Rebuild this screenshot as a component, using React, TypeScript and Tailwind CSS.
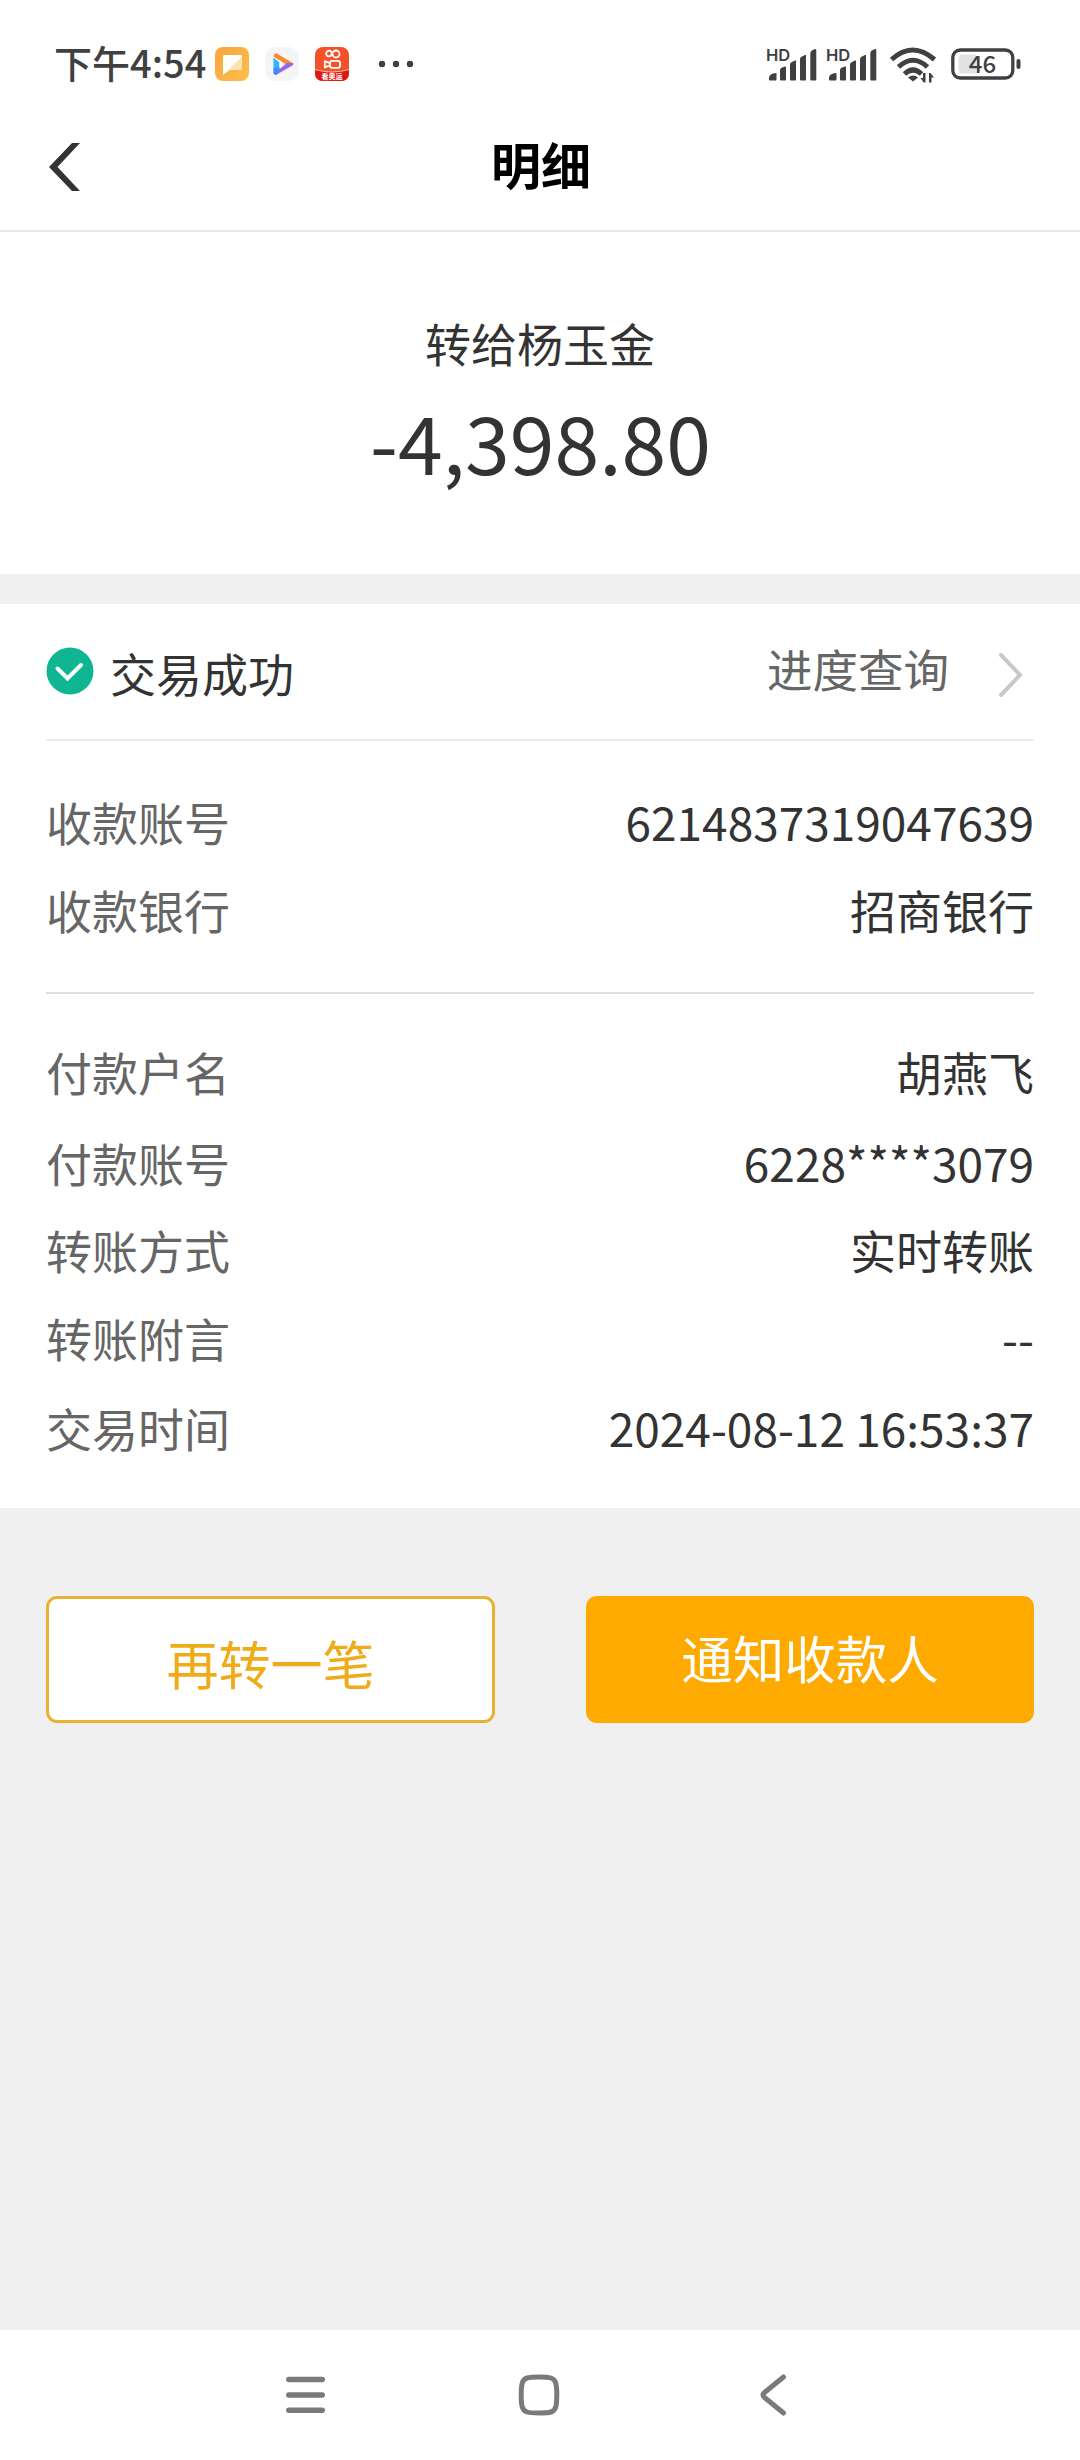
import React from 'react';

type Row = { label: string; value: string; height: string };

const payeeRows: Row[] = [
  { label: '收款账号', value: '6214837319047639', height: 'h-[88px]' },
  { label: '收款银行', value: '招商银行', height: 'h-[88px]' },
];

const payerRows: Row[] = [
  { label: '付款户名', value: '胡燕飞', height: 'h-[92px]' },
  { label: '付款账号', value: '6228****3079', height: 'h-[90px]' },
  { label: '转账方式', value: '实时转账', height: 'h-[84px]' },
  { label: '转账附言', value: '--', height: 'h-[92px]' },
  { label: '交易时间', value: '2024-08-12 16:53:37', height: 'h-[88px]' },
];

const Signal: React.FC = () => (
  <svg width="52" height="36" viewBox="0 0 52 36" className="shrink-0 overflow-visible" fill="#404040">
    <text x="-1" y="14.500" fontSize="16.500" fontWeight="600" fontFamily="Inter, sans-serif">HD</text>
    <path d="M2 33.500V31q1-3 4-3.500l3.500-.5v6.500q0 1-1 1H3q-1 0-1-1z" />
    <path d="M13 33.500V24q0-1.500 1.500-2.200L18 20.500h1v13q0 1-1 1h-4q-1 0-1-1z" />
    <path d="M23 33.500V18.500q0-1.500 1.500-2.200L28 14.500h1v19q0 1-1 1h-4q-1 0-1-1z" />
    <path d="M33 33.500V13q0-1.500 1.500-2.200L38 9h1v24.500q0 1-1 1h-4q-1 0-1-1z" />
    <path d="M43.300 33.500V7q0-1.500 1.500-2.500l2.500-1.300q2-.5 2 1v29.300q0 1-1 1h-4q-1 0-1-1z" />
  </svg>
);

const StatusBar: React.FC = () => (
  <div className="flex h-[128px] items-center pl-[54px]">
    <span className="mb-[4px] w-[161px] shrink-0 text-[38px] font-medium leading-none text-[#404040]">下午4:54</span>

    <svg width="34" height="34" viewBox="0 0 34 34" className="shrink-0">
      <defs>
        <linearGradient id="note" x1="0" y1="0" x2="1" y2="1">
          <stop offset="0" stopColor="#f9a43f" />
          <stop offset="1" stopColor="#fbc04a" />
        </linearGradient>
      </defs>
      <rect width="34" height="34" rx="8" fill="url(#note)" />
      <path d="M8 9.500Q8 8 9.500 8h16Q27 8 27 9.500v12q0 1.500-1.500 1.500H15.500L8 28z" fill="#fde3b4" />
      <path d="M8 9.500Q8 8 9.500 8h16Q27 8 27 9.500L8 28z" fill="#ffffff" />
    </svg>

    <svg width="34" height="34" viewBox="0 0 34 34" className="ml-4 shrink-0">
      <rect width="34" height="34" rx="11" fill="#f5f5f8" />
      <path d="M8.500 10.500l6 5v6l-3 6-3-1z" fill="#35b5f5" />
      <path d="M11 6l17.500 10.500-4.500 3-15.500-10q.5-3 2.500-3.500z" fill="#f58b2e" />
      <path d="M28.500 16.500q0 1.500-2 2.500L11 28q-1.500 0-2-1.500l13-10.500z" fill="#9a63f0" />
      <path d="M8.500 21l6-1v4.500L11 28q-2 0-2.500-2z" fill="#3f8cf8" />
      <path d="M14.500 13.500l5.500 3.500-5.500 4z" fill="#ffffff" />
    </svg>

    <svg width="34" height="34" viewBox="0 0 34 34" className="ml-4 shrink-0">
      <rect width="34" height="34" rx="8" fill="#f4502a" />
      <path d="M0 22q17 5.500 34 0v4q0 8-8 8H8q-8 0-8-8z" fill="#dc1a14" />
      <path d="M0 22.500q17 5 34 0" fill="none" stroke="#ffc49a" strokeWidth="1" />
      <g fill="none" stroke="#ffffff" strokeWidth="1.800">
        <circle cx="14" cy="6.500" r="2.800" />
        <circle cx="21" cy="7" r="3.500" />
        <rect x="15" y="13.800" width="10" height="7" rx="2" />
        <path d="M15 16.200l-5.200-2v6.200l5.200-2" strokeLinejoin="round" />
      </g>
      <text x="17" y="32" fontSize="7" fontWeight="700" fill="#ffffff" textAnchor="middle">看奥运</text>
    </svg>

    <svg width="36" height="8" viewBox="0 0 36 8" className="ml-[29px] shrink-0" fill="#404040">
      <circle cx="4" cy="4" r="3.200" />
      <circle cx="18" cy="4" r="3.200" />
      <circle cx="32" cy="4" r="3.200" />
    </svg>

    <div className="ml-[353px] flex items-center">
      <Signal />
      <div className="w-2" />
      <Signal />

      <svg width="48" height="36" viewBox="0 0 48 36" className="ml-[10px] mt-px shrink-0">
        <g fill="none" stroke="#404040" strokeWidth="5">
          <path d="M2.500 12.500q21-19 43 0" />
          <path d="M9.500 20q14.500-13.500 29 0" />
          <path d="M15.500 27q8.500-8 17 0" />
        </g>
        <path d="M24 34.500l-5-4q5-4 10 0z" fill="#404040" />
        <path d="M36.500 26v9.500h-1.800l-3.200-4.500h2.500v-5zM40 35.500V26h1.500l3.500 4.500h-2.500v5z" fill="#404040" />
      </svg>

      <svg width="70" height="32" viewBox="0 0 70 32" className="ml-[14px] shrink-0 overflow-visible">
        <rect x="1.800" y="2" width="60" height="28" rx="7.500" fill="none" stroke="#404040" strokeWidth="3.300" />
        <path d="M12 6.500h13v19H12q-4.500 0-4.500-4.500v-10q0-4.500 4.500-4.500z" fill="#e2e2e2" />
        <text x="31.500" y="24.500" fontSize="24" fontWeight="500" fill="#404040" textAnchor="middle">46</text>
        <rect x="65.500" y="11" width="4" height="10" rx="2" fill="#404040" />
      </svg>
    </div>
  </div>
);

const Header: React.FC = () => (
  <div className="grid h-[104px] grid-cols-3 border-b-2 border-[#e9e9e9] pb-[24px]">
    <div className="flex items-center pl-[48px]">
      <svg width="34" height="48" viewBox="0 0 34 48" className="mb-px">
        <path d="M24 0h8L9.500 24 32 48h-8L1 24z" fill="#333333" />
      </svg>
    </div>
    <h1 className="flex items-center justify-center pb-[8px] pl-[2px] text-[50px] font-bold leading-none text-black">明细</h1>
  </div>
);

const DetailRow: React.FC<{ row: Row }> = ({ row }) => (
  <div className={`flex items-center justify-between ${row.height}`}>
    <span className="text-[#666666]">{row.label}</span>
    <span className="text-[#333333]">{row.value}</span>
  </div>
);

const App: React.FC = () => {
  return (
    <div className="flex h-[2460px] w-[1080px] flex-col overflow-hidden bg-[#f0f0f0] font-['Noto_Sans_CJK_SC',sans-serif] text-[46px] leading-none">
      <div className="bg-white">
        <StatusBar />
        <Header />
      </div>

      <section className="flex h-[342px] flex-col items-center bg-white pt-[87px] text-[#333333]">
        <p>转给杨玉金</p>
        <p className="mt-[35px] pl-px text-[80.5px]">-4,398.80</p>
      </section>

      <section className="mt-[30px] h-[904px] bg-white px-[46px]">
        <div className="flex h-[137px] items-center border-b-2 border-[#ececec]">
          <svg width="48" height="48" viewBox="0 0 48 48" className="mb-[2px] shrink-0">
            <circle cx="24" cy="24" r="23.500" fill="#10b693" />
            <path d="M11.500 21.500l10 10L35 18" fill="none" stroke="#ffffff" strokeWidth="4" strokeLinecap="round" />
          </svg>
          <span className="ml-[16px] text-[#333333]">交易成功</span>
          <span className="mb-[5px] ml-auto text-[45.500px] text-[#666666]">进度查询</span>
          <svg width="24" height="44" viewBox="0 0 24 44" className="ml-[50px] mr-[11px] mt-[7px] shrink-0">
            <path d="M2 2l19 20L2 42" fill="none" stroke="#c8c8c8" strokeWidth="4" strokeLinecap="round" />
          </svg>
        </div>

        <div className="h-[253px] border-b-2 border-[#e0e0e0] pt-[36px]">
          {payeeRows.map((row) => (
            <DetailRow key={row.label} row={row} />
          ))}
        </div>

        <div className="pt-[31px]">
          {payerRows.map((row) => (
            <DetailRow key={row.label} row={row} />
          ))}
        </div>
      </section>

      <div className="mt-[88px] flex justify-between px-[46px]">
        <button className="flex h-[127px] w-[449px] items-center justify-center rounded-[11px] border-[3px] border-[#eab030] bg-white pt-[7px] text-[52px] text-[#f0ab18]">再转一笔</button>
        <button className="flex h-[127px] w-[448px] items-center justify-center rounded-[11px] bg-[#ffaa00] pb-[5px] text-[51.500px] text-white">通知收款人</button>
      </div>

      <nav className="mt-auto flex h-[130px] items-center bg-white pl-[286px]">
        <svg width="39" height="42" viewBox="0 0 39 42" stroke="#7a7a7a" strokeWidth="5.500" strokeLinecap="round">
          <path d="M2.800 5.500h33.500M2.800 21h33.500M2.800 36.200h33.500" />
        </svg>
        <svg width="42" height="42" viewBox="0 0 42 42" className="ml-[193px]">
          <path d="M21 3c-6 0-9.500.2-12 1C4.500 5.500 3.200 9 3.200 21s1.300 15.500 5.800 17c2.500.8 6 1 12 1s9.500-.2 12-1c4.500-1.500 5.800-5 5.800-17S37.500 5.500 33 4c-2.500-.8-6-1-12-1z" fill="none" stroke="#7a7a7a" strokeWidth="5" />
        </svg>
        <svg width="28" height="42" viewBox="0 0 28 42" className="ml-[199px]">
          <path d="M24.500 3L5.500 18.500q-3 2.500 0 5L24.500 39" fill="none" stroke="#7a7a7a" strokeWidth="5" strokeLinecap="round" />
        </svg>
      </nav>
    </div>
  );
};

export default App;
